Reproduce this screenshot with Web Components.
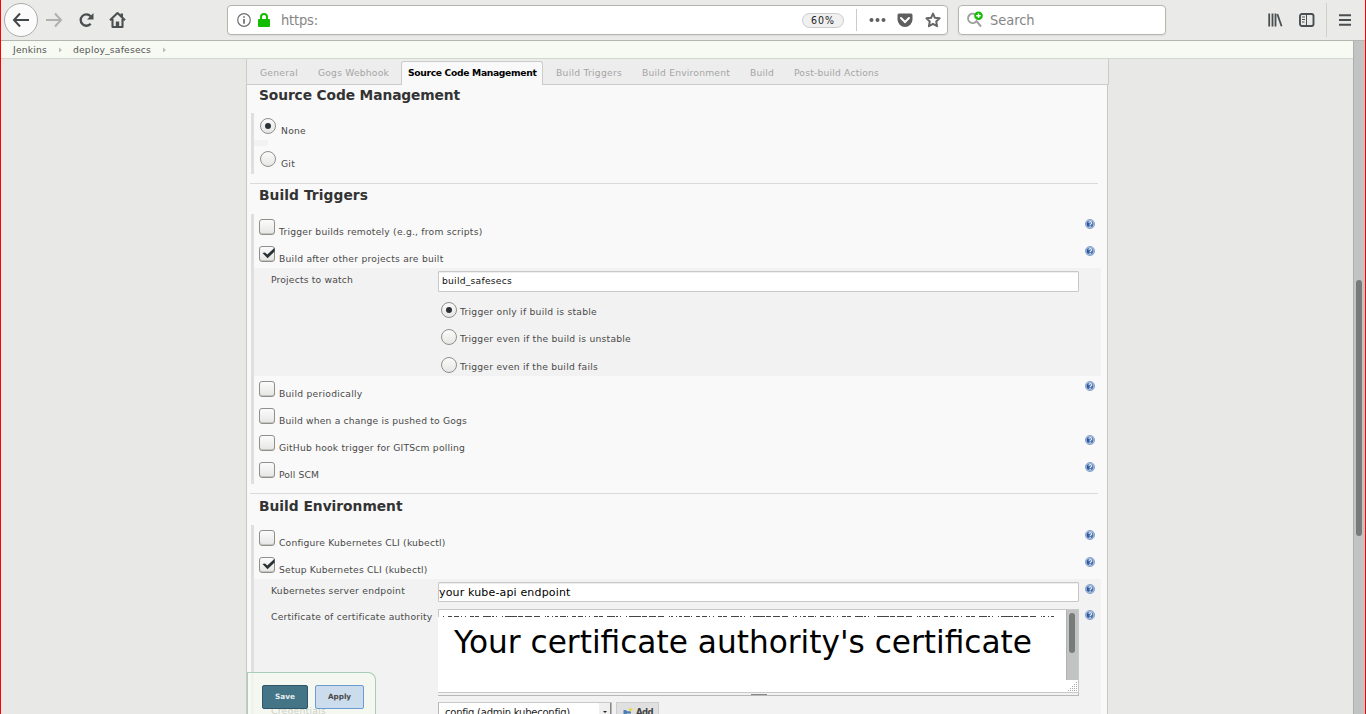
<!DOCTYPE html>
<html lang="en">
<head>
<meta charset="utf-8">
<title>deploy_safesecs Config</title>
<style>
html,body{margin:0;height:100%;overflow:hidden;background:#e8e8e6;font-family:"DejaVu Sans",sans-serif}
</style>
</head>
<body>
<jenkins-page></jenkins-page>
<script>
const define = (name, html, setup) => customElements.define(name, class extends HTMLElement {
  connectedCallback() {
    if (this.shadowRoot) return;
    const t = document.createElement('template');
    t.innerHTML = typeof html === 'function' ? html(this) : html;
    this.attachShadow({mode: 'open'}).append(t.content.cloneNode(true));
    if (setup) setup(this);
  }
});

/* text run tracked to a given width */
define('fit-text', '<style>:host{display:inline-block;white-space:nowrap}</style><span><slot></slot></span>', el => {
  const s = el.shadowRoot.querySelector('span'), w = +el.getAttribute('w');
  if (w) s.style.letterSpacing = ((w - s.getBoundingClientRect().width) / el.textContent.length).toFixed(3) + 'px';
});

define('help-icon', `<style>:host{display:block;width:10px;height:10px}svg{display:block}</style>
<svg width="10" height="10" viewBox="0 0 10 10"><circle cx="5" cy="5" r="4.6" fill="#a9bfdf" stroke="#7f9cc6" stroke-width=".8"/><circle cx="5" cy="5" r="3.3" fill="#4a72b0"/><path d="M1.8 3.5H3.6V7H2.2Z" fill="#2c5496"/><path d="M3.9 3.7C4 2.3 6.8 2.2 6.7 3.9C6.6 4.8 5.4 4.9 5.2 6M5.1 6.8V7.9" fill="none" stroke="#e4edfb" stroke-width="1.2"/></svg>`);

define('check-box', el => `<style>:host{display:block;width:16px;height:16px;flex:none}
div{box-sizing:border-box;width:16px;height:16px;border:1px solid #8f8f8b;border-radius:3px;background:linear-gradient(#fbfbfb,#e6e6e5);box-shadow:inset 0 -1px #c4c4c0}svg{display:block;margin:-1px}</style>
<div>${el.hasAttribute('checked') ? '<svg width="16" height="16" viewBox="0 0 16 16"><path d="M3.5 7L6 6.4L8.3 8.4L15.6 1.8V5.6L8.5 12.3Z" fill="#2b3235"/></svg>' : ''}</div>`);

define('radio-dot', el => `<style>:host{display:block;width:16px;height:16px;flex:none}
div{box-sizing:border-box;width:16px;height:16px;border:1px solid #8f8f8b;border-radius:50%;background:linear-gradient(#fbfbfb,#e6e6e5);display:grid;place-items:center}
i{width:6px;height:6px;border-radius:50%;background:#2b3235}</style><div>${el.hasAttribute('checked') ? '<i></i>' : ''}</div>`);

define('option-row', el => `<style>:host{display:flex;box-sizing:border-box;height:27px;padding:5px 6px 0 5px;font-size:9.2px;line-height:12px;color:#4a4a4a}
fit-text{margin:7px 0 0 4px}help-icon{margin:0 0 0 auto}</style>
<check-box ${el.hasAttribute('checked') ? 'checked' : ''}></check-box><fit-text w="${el.getAttribute('w')}">${el.getAttribute('label')}</fit-text>${el.hasAttribute('help') ? '<help-icon></help-icon>' : ''}`);

define('radio-row', el => `<style>:host{display:flex;height:16px;font-size:9.2px;line-height:12px;color:#4a4a4a}
fit-text{margin:var(--drop,4px) 0 0 var(--gap,3px)}</style>
<radio-dot ${el.hasAttribute('checked') ? 'checked' : ''}></radio-dot><fit-text w="${el.getAttribute('w')}">${el.getAttribute('label')}</fit-text>`);

define('config-section', el => `<style>:host{display:block;position:relative}
h2{margin:0 0 0 12px;height:var(--head,30px);font-size:13.8px;line-height:var(--hl,22px);color:#333}
.body{margin-left:4px;margin-right:6px;border-left:3px solid #dfdfdf}
hr{border:0;margin:9px 9px 0 3px;height:1px;background:#dadada}</style>
<h2><fit-text w="${el.getAttribute('w')}">${el.getAttribute('heading')}</fit-text></h2><div class="body"><slot></slot></div>${el.hasAttribute('last') ? '' : '<hr>'}`);

define('nested-block', '<style>:host{display:block;box-sizing:border-box;background:#f2f2f2;padding-left:17px}</style><slot></slot>');

define('field-row', el => `<style>:host{display:flex;font-size:9.2px;line-height:12px;color:#4a4a4a}
.l{width:167px;flex:none;padding-top:var(--lt,3px)}.c{width:641px;flex:none}help-icon{margin:var(--ht,2px) 0 0 6px}</style>
<div class="l"><fit-text w="${el.getAttribute('w')}">${el.getAttribute('label')}</fit-text></div><div class="c"><slot></slot></div>${el.hasAttribute('help') ? '<help-icon></help-icon>' : ''}`);

define('text-input', `<style>:host{display:block;box-sizing:border-box;height:21px;border:1px solid #c8c8c8;border-radius:1px;background:#fff;padding-left:3px;line-height:18px;color:#111;box-shadow:inset 0 1px #eee}</style><slot></slot>`);

define('cert-area', `<style>
:host{display:block;height:87px}
.box{box-sizing:border-box;height:84px;border:1px solid #c8c8c8;border-left:0;background:#fff;display:flex}
.txt{flex:1;color:#000;font-size:31.2px;line-height:40px}
.txt svg{display:block}.txt p{margin:4px 0 0 16px;white-space:nowrap}
.bar{width:12px;height:70px;box-sizing:border-box;background:#c2c4c3;border-left:1px solid #b0b0b0;padding:3px 2px 0 2px}
.bar i{display:block;width:6px;height:40px;border-radius:3px;background:#777b7a}
.side{width:12px}
.grip{height:3px;box-sizing:border-box;border:solid #b8b8b8;border-width:0 1px 1px 0;background:#f2f2f2;display:flex;justify-content:center}
.grip i{width:16px;height:1px;margin:1px 0 0 2px;background:#888}
</style>
<div class="box"><div class="txt"><svg width="627" height="8"><path d="M.5 0V7" stroke="#c8c8c8"/><path d="M5 6.5H617" stroke="#444" stroke-dasharray="1 4 4 2 5 2 1 3 1 4 4 1 4 4 8 1 2 2 1 5 1 2 12 1 5 2 7 2 6 5 1 1 2 3 1 2 3 2 6 1"/></svg><p><fit-text class="big">Your certificate authority's certificate</fit-text></p></div>
<div class="side"><div class="bar"><i></i></div><svg width="12" height="12" style="display:block"><path d="M10.5 2V12M8.5 4V12M6.5 6V12M4.5 8V12M2.5 10V12" stroke="#aaa" stroke-dasharray="1 1"/></svg></div></div>
<div class="grip"><i></i></div>`);

define('cred-row', `<style>:host{display:flex;font-size:10px;line-height:20px;color:#222}
.sel{box-sizing:border-box;width:174px;height:20px;border:1px solid #b5b5b5;border-top-color:#c8c8c8;background:#fff;padding-left:6px;display:flex;justify-content:space-between}
.sel b{width:11px;background:#efefef;border-right:1px solid #888;display:grid;place-items:center}
.sel b:after{content:"";border:2px solid transparent;border-top-color:#222;margin-top:2px}
.add{margin-left:4px;box-sizing:border-box;width:43px;height:20px;border:1px solid #cdcdcd;background:#e0e0e0;display:flex;gap:3px;padding-left:6px;font-size:8.5px;font-weight:bold;color:#444;line-height:18px}
svg{margin-top:4px}</style>
<div class="sel"><fit-text w="125">config (admin kubeconfig)</fit-text><b></b></div>
<div class="add"><svg width="10" height="9" viewBox="0 0 10 9"><path d="M.5 3H3L4 4.2H8V6.5H4L3 7.5H.5Z" fill="#4a7fb8"/><path d="M7.5 0L8.3 1.8L10 2.6L8.3 3.4L7.5 5L6.7 3.4L5 2.6L6.7 1.8Z" fill="#e8d840"/></svg><fit-text w="17">Add</fit-text></div>`);

define('save-bar', `<style>:host{display:flex;position:absolute;left:0;bottom:0;width:129px;height:42px;box-sizing:border-box;border:solid #a8cdb8;border-width:1px 1px 0 1px;border-radius:0 8px 0 0;background:rgba(245,250,239,.75);padding:12px 0 0 14px;gap:7px}
div{box-sizing:border-box;height:24px;border:1px solid #305468;border-radius:2px;background:#447586;color:#e8eef0;font-size:7.3px;font-weight:bold;line-height:22px;text-align:center;width:46px}
.a{background:#cbdced;border-color:#6b9bd1;color:#4a4a4a;width:49px}</style>
<div><fit-text w="20">Save</fit-text></div><div class="a"><fit-text w="23">Apply</fit-text></div>`);

define('tab-strip', `<style>:host{display:flex;box-sizing:border-box;width:863px;height:26px;border:1px solid #cbcbcb;border-width:0 1px 1px 1px;background:#ededed;font-size:9.2px;line-height:12px;color:#a5a5a5;padding:8px 0 0 13px;gap:20px}
.on{box-sizing:border-box;margin:-6px -7px -1px -8px;height:24px;width:142px;border:1px solid #cbcbcb;border-bottom:0;border-radius:3px 3px 0 0;background:#f9f9f9;color:#000;font-weight:bold;padding:5px 0 0 6px}</style>
<fit-text w="38">General</fit-text><fit-text w="71">Gogs Webhook</fit-text><div class="on"><fit-text w="128.5">Source Code Management</fit-text></div><fit-text w="66">Build Triggers</fit-text><fit-text w="88">Build Environment</fit-text><fit-text w="24">Build</fit-text><fit-text w="85">Post-build Actions</fit-text>`);

define('crumb-bar', `<style>:host{display:flex;box-sizing:border-box;height:18px;border-bottom:1px solid #d3d6cf;background:#f6faf2;font-size:9.2px;line-height:17px;color:#555;padding-left:12px}
svg{margin:6px 0 0 12px}.d{margin-left:10px}</style>
<fit-text w="34">Jenkins</fit-text><svg width="4" height="6"><path d="M0 .5L3 3L0 5.5Z" fill="#bbb"/></svg><fit-text class="d" w="78">deploy_safesecs</fit-text><svg width="4" height="6"><path d="M0 .5L3 3L0 5.5Z" fill="#bbb"/></svg>`);

define('browser-bar', `<style>
:host{display:flex;box-sizing:border-box;height:41px;border-bottom:1px solid #b5b5b0;background:#eaeae8;align-items:center;padding:0 0 0 3px;color:#4a4f52}
svg{display:block;flex:none}
.back{box-sizing:border-box;width:34px;height:34px;border:1px solid #acacac;border-radius:50%;background:#fbfbfb;display:grid;place-items:center}
.field{box-sizing:border-box;height:30px;border:1px solid #b5b5b0;border-radius:4px;background:#fff;display:flex;align-items:center;box-shadow:0 1px 2px #0001;color:#858585;font:14.5px "DejaVu Sans Condensed","DejaVu Sans",sans-serif;font-stretch:condensed}
.url{width:721px;margin-left:101px;padding-left:9px}.search{width:208px;margin-left:10px;padding-left:7px}
.zoom{box-sizing:border-box;width:42px;height:15px;border:1px solid #ccc;border-radius:8px;background:#f0f0f0;color:#222;font-size:10.5px;line-height:13px;text-align:center;margin-left:auto}
.sep{width:1px;height:22px;background:#ccc;margin:0 12px 0 12px}
</style>
<div class="back"><svg width="18" height="16" viewBox="0 0 18 16"><path d="M8 1.5L2 8L8 14.5M2 8H17" fill="none" stroke="#43484b" stroke-width="2"/></svg></div>
<svg style="margin-left:7px" width="18" height="16" viewBox="0 0 18 16"><path d="M10 1.5L16 8L10 14.5M16 8H1" fill="none" stroke="#b0b0ae" stroke-width="2"/></svg>
<svg style="margin-left:15px" width="17" height="16" viewBox="0 0 17 16"><path d="M12.7 11.8A5.7 5.7 0 1 1 12.6 4.2" fill="none" stroke="#4a4f52" stroke-width="2.3"/><path d="M15.5 1V7.5H9Z" fill="#4a4f52"/></svg>
<svg style="margin-left:14px" width="17" height="18" viewBox="0 0 17 18"><path d="M1 9.2L8.5 2L16 9.2M3.5 8V16H13.5V8" fill="none" stroke="#4a4f52" stroke-width="2.1" stroke-linejoin="round"/><path d="M11.5 2.5H14V7L11.5 5Z" fill="#4a4f52"/><path d="M6.8 16V10.5H10.2V16Z" fill="#4a4f52"/></svg>
<div class="field url"><svg width="14" height="14" viewBox="0 0 14 14"><circle cx="7" cy="7" r="6.3" fill="none" stroke="#6f6f6f" stroke-width="1.2"/><path d="M7 6V10.7M7 3.2V4.8" stroke="#6f6f6f" stroke-width="1.7"/></svg>
<svg style="margin:0 11px 0 7px" width="12" height="14" viewBox="0 0 12 14"><path d="M3 7V4A3 3 0 0 1 9 4V7" fill="none" stroke="#12bc00" stroke-width="2"/><rect y="6" width="12" height="8" rx="1" fill="#12bc00"/></svg>
<fit-text w="37">https:</fit-text><span class="zoom"><fit-text w="24">60%</fit-text></span><span class="sep"></span>
<svg width="17" height="6"><g fill="#5e5e5e"><circle cx="2.5" cy="3" r="2"/><circle cx="8.5" cy="3" r="2"/><circle cx="14.5" cy="3" r="2"/></g></svg>
<svg style="margin-left:11px" width="16" height="15" viewBox="0 0 16 15"><path d="M2 0.5H14Q15.5 .5 15.5 2V6.5A7.5 7.5 0 0 1 .5 6.5V2Q.5 .5 2 .5Z" fill="#5e5e5e"/><path d="M4 5L8 9L12 5" fill="none" stroke="#fff" stroke-width="2" stroke-linecap="round"/></svg>
<svg style="margin:0 6px 0 12px" width="16" height="16" viewBox="0 0 16 16"><path d="M8 1.6L9.9 5.8L14.6 6.3L11.2 9.4L12.1 14.2L8 11.8L3.9 14.2L4.8 9.4L1.4 6.3L6.1 5.8Z" fill="none" stroke="#666" stroke-width="2" stroke-linejoin="round"/></svg></div>
<div class="field search"><svg style="margin-right:6px" width="18" height="20" viewBox="0 0 18 20"><path d="M9 4.2A4.7 4.7 0 1 0 10.5 11.2L15 16.5" fill="none" stroke="#a0a0a0" stroke-width="2"/><circle cx="12.5" cy="5.7" r="4.3" fill="#12bc00"/><path d="M12.5 3.4V8M10.2 5.7H14.8" stroke="#fff" stroke-width="1.4"/></svg><fit-text w="44.5">Search</fit-text></div>
<svg style="margin-left:102px" width="15" height="14" viewBox="0 0 15 14"><path d="M1.2 .5V13.5M4.5 .5V13.5M7.5 .5V13.5" stroke="#4a4f52" stroke-width="1.8"/><path d="M9.3 1L13.6 13.3" stroke="#4a4f52" stroke-width="1.8"/></svg>
<svg style="margin-left:16px" width="16" height="14" viewBox="0 0 16 14"><rect x="1" y="1" width="13.5" height="12" rx="2" fill="none" stroke="#4a4f52" stroke-width="1.9"/><path d="M7.5 1V13M3 4H6M3 6.5H6M3 9H5.5" stroke="#4a4f52"/></svg>
<i style="width:1px;height:34px;background:#d0d0ce;margin:0 12px 0 11px"></i>
<svg width="12" height="12"><path d="M0 1.2H12M0 6H12M0 10.8H12" stroke="#4a4f52" stroke-width="2"/></svg>`);

define('jenkins-page', `<style>
:host{display:flex;flex-direction:column;box-sizing:border-box;width:1366px;height:714px;border:solid #f00;border-width:0 1px;overflow:hidden}
.main{display:flex;height:673px}
.page{width:1352px;height:673px;overflow:hidden}
.scroll{box-sizing:border-box;width:12px;border-left:1px solid #adafae;background:#c2c4c3;padding:239px 0 0 2px}
.scroll i{display:block;width:6px;height:256px;border-radius:3px;background:#777b7a}
.col{position:relative;margin-left:245px;width:863px;height:655px}
.form{box-sizing:border-box;width:862px;height:629px;overflow:hidden;border:solid #c8c8c8;border-width:0 1px;background:#f9f9f9}
save-bar{left:1px}
</style>
<browser-bar></browser-bar>
<div class="main"><div class="page"><crumb-bar></crumb-bar>
<div class="col"><tab-strip></tab-strip><div class="form">
<config-section heading="Source Code Management" w="201" style="--head:28px;--hl:20px"><div style="height:61px;box-sizing:border-box;padding:5px 0 0 6px;--drop:7px;--gap:5px"><radio-row checked label="None" w="25"></radio-row><div style="width:14px;height:6px;margin:6px 0 5px -6px;background:#f2f2f2"></div><radio-row label="Git" w="14"></radio-row></div></config-section>
<config-section heading="Build Triggers" w="109">
<option-row label="Trigger builds remotely (e.g., from scripts)" w="203.5" help></option-row>
<option-row checked label="Build after other projects are built" w="164.5" help></option-row>
<nested-block style="height:108px;padding-top:3px"><field-row label="Projects to watch" w="82"><text-input><fit-text w="70">build_safesecs</fit-text></text-input>
<radio-row style="margin:10px 0 11px 3px" checked label="Trigger only if build is stable" w="137"></radio-row><radio-row style="margin:0 0 12px 3px" label="Trigger even if the build is unstable" w="171"></radio-row><radio-row style="margin-left:3px" label="Trigger even if the build fails" w="138"></radio-row></field-row></nested-block>
<option-row label="Build periodically" w="83.5" help></option-row>
<option-row label="Build when a change is pushed to Gogs" w="188"></option-row>
<option-row label="GitHub hook trigger for GITScm polling" w="186" help></option-row>
<option-row label="Poll SCM" w="40" help></option-row>
</config-section>
<config-section heading="Build Environment" w="143.5" last style="--head:31px;--hl:24px">
<option-row label="Configure Kubernetes CLI (kubectl)" w="166.5" help></option-row>
<option-row checked label="Setup Kubernetes CLI (kubectl)" w="148.5" help></option-row>
<nested-block style="height:150px;padding-top:3px">
<field-row label="Kubernetes server endpoint" w="134" help><text-input style="height:20px;font-size:11px;line-height:20px;padding-left:0;color:#000"><fit-text w="131.5">your kube-api endpoint</fit-text></text-input></field-row>
<field-row style="margin-top:7px;--lt:2px;--ht:1px" label="Certificate of certificate authority" w="161.5" help><cert-area></cert-area></field-row>
<field-row style="margin-top:6px" label="Credentials" w="55"><cred-row></cred-row></field-row>
</nested-block></config-section>
</div><save-bar></save-bar></div></div><div class="scroll"><i></i></div></div>`);
</script>
</body>
</html>
